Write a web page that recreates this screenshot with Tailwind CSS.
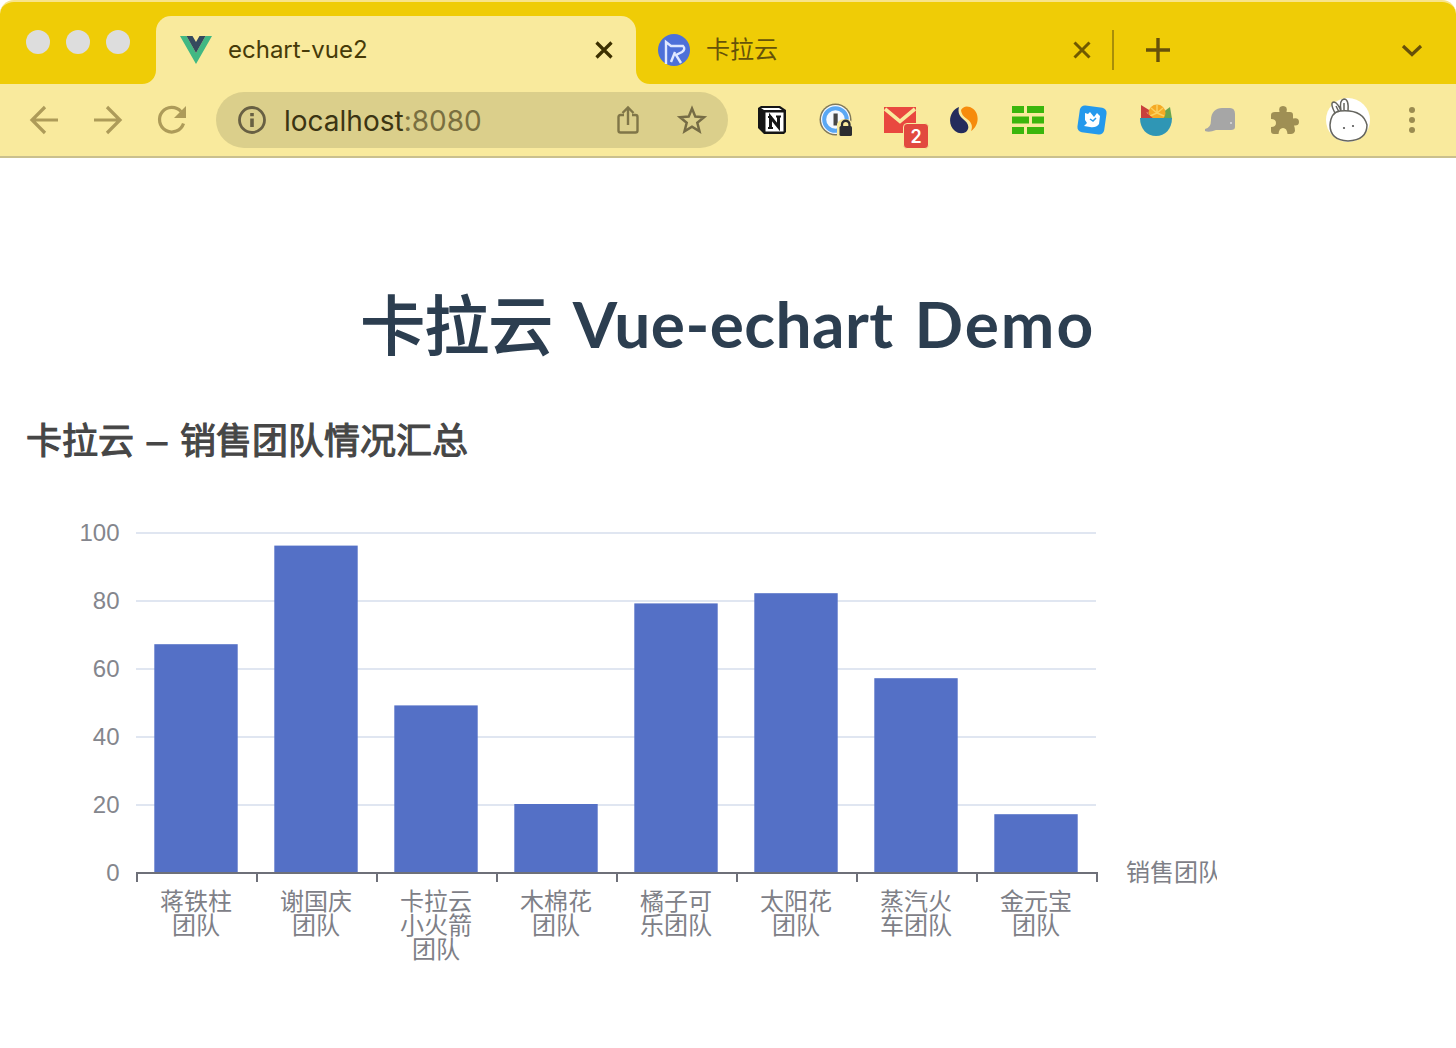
<!DOCTYPE html>
<html lang="zh-CN">
<head>
<meta charset="utf-8">
<title>echart-vue2</title>
<script src="https://cdn.jsdelivr.net/npm/@tailwindcss/browser@4"></script>
</head>
<body class="bg-white w-[1456px] h-[1048px] overflow-hidden font-['Inter','Noto_Sans_CJK_SC',sans-serif]">
<header>
  <!-- Tab strip -->
  <div class="h-[84px] rounded-t-[14px] bg-[#efcc06] border-t-2 border-[#f8e48a] flex">
    <div class="w-[156px] pl-[26px] pt-7 flex gap-4">
      <span class="size-6 rounded-full bg-[#dddddd]"></span>
      <span class="size-6 rounded-full bg-[#dddddd]"></span>
      <span class="size-6 rounded-full bg-[#dddddd]"></span>
    </div>
    <div class="relative mt-[14px] w-[480px] h-[68px] rounded-t-[15px] bg-[#f9ea9d] flex items-center pl-6 pr-5">
      <svg class="absolute -left-[14px] bottom-0" width="14" height="14"><path d="M14 0V14H0C8 14 14 8 14 0Z" fill="#f9ea9d"/></svg>
      <svg class="absolute -right-[14px] bottom-0" width="14" height="14"><path d="M0 0V14H14C6 14 0 8 0 0Z" fill="#f9ea9d"/></svg>
      <svg width="32" height="28" viewBox="0 0 32 28"><path d="M0 0H6.500L16 17L25.500 0H32L16 28Z" fill="#41b883"/><path d="M6.500 0H12.500L16 6L19.500 0H25.500L16 17Z" fill="#35495e"/></svg>
      <span class="ml-4 text-[24px] leading-8 text-[#463a08] flex-1">echart-vue2</span>
      <svg width="24" height="24" viewBox="0 0 24 24" fill="none" stroke="#3c3000" stroke-width="3.200"><path d="M4.500 4.500 19.500 19.500M19.500 4.500 4.500 19.500"/></svg>
    </div>
    <div class="mt-[14px] w-[477px] h-[68px] flex items-center pl-[22px] pr-[19px]">
      <svg width="32" height="32" viewBox="0 0 32 32"><circle cx="16" cy="16" r="16" fill="#4d70d9"/><path d="M8 30V8L13 12H25Q28 15 24 18L18 21L23 29M13 28L17 18" fill="none" stroke="#dfe8ff" stroke-width="2.400"/></svg>
      <span class="ml-4 text-[24px] leading-8 text-[#665309] flex-1">卡拉云</span>
      <svg width="24" height="24" viewBox="0 0 24 24" fill="none" stroke="#705900" stroke-width="3"><path d="M4.500 4.500 19.500 19.500M19.500 4.500 4.500 19.500"/></svg>
    </div>
    <div class="mt-7 ml-[-1px] h-10 w-[2px] bg-[#a88e08]"></div>
    <div class="mt-[14px] h-[68px] flex-1 flex items-center justify-between pl-8 pr-8">
      <svg width="24" height="24" viewBox="0 0 24 24" stroke="#66500a" stroke-width="3.400"><path d="M12 0V24M0 12H24"/></svg>
      <svg width="24" height="24" viewBox="0 0 24 24" fill="none" stroke="#66500a" stroke-width="3.200"><path d="M3 8 12 16.500 21 8"/></svg>
    </div>
  </div>
  <!-- Toolbar -->
  <div class="h-[74px] bg-[#f9ea9d] border-b-2 border-[#cac08e] flex items-center pl-3">
    <div class="w-16 flex justify-center"><svg width="32" height="32" viewBox="0 0 32 32" fill="none" stroke="#ad9b59" stroke-width="3.200"><path d="M30 16H4M17 3 4 16 17 29"/></svg></div>
    <div class="w-16 flex justify-center"><svg width="32" height="32" viewBox="0 0 32 32" fill="none" stroke="#ad9b59" stroke-width="3.200"><path d="M2 16H28M15 3 28 16 15 29"/></svg></div>
    <div class="w-16 flex justify-center"><svg width="32" height="32" viewBox="0 0 32 32"><path d="M27.500 19.500A12.300 12.300 0 1 1 25 7.500" fill="none" stroke="#ad9b59" stroke-width="3.200"/><path d="M30 2V14H18Z" fill="#ad9b59"/></svg></div>
    <div class="ml-3 w-[512px] h-14 rounded-full bg-[#dbcf8b] flex items-center pl-[22px] pr-5">
      <svg width="28" height="28" viewBox="0 0 28 28"><circle cx="14" cy="14" r="12.500" fill="none" stroke="#686043" stroke-width="2.800"/><path d="M12.200 12.500H15.800V21H12.200ZM12.200 7H15.800V10.200H12.200Z" fill="#686043"/></svg>
      <span class="ml-[18px] pt-[2px] text-[28px] leading-8 text-[#3b3413] flex-1">localhost<span class="text-[#7a6f40]">:8080</span></span>
      <svg width="24" height="30" viewBox="0 0 24 30" fill="none" stroke="#807648" stroke-width="2.400"><path d="M8 10H4.500Q2.500 10 2.500 12V25.500Q2.500 27.500 4.500 27.500H19.500Q21.500 27.500 21.500 25.500V12Q21.500 10 19.500 10H16M12 20V3M6.500 8 12 2.500 17.500 8"/></svg>
      <svg class="ml-9" width="32" height="32" viewBox="0 0 32 32" fill="none" stroke="#766c45" stroke-width="2.500"><path d="M16 4.500 19.300 12.600 28 13.200 21.300 18.800 23.500 27.300 16 22.700 8.500 27.300 10.700 18.800 4 13.200 12.700 12.600Z"/></svg>
    </div>
    <div class="ml-3 w-16 flex justify-center"><svg width="32" height="32" viewBox="0 0 32 32"><path d="M2 4 5 2H24L30 6V28L28 30H8L2 24Z" fill="#151515"/><path d="M5 4H23L26 6H8Z" fill="#fff"/><path d="M9.500 8.500H27.500V27.500H9.500Z" fill="#fff"/><path d="M14.500 24V13L22.500 23V12" fill="none" stroke="#151515" stroke-width="3"/><path d="M12 13H16M20 12.500H25M12 24H17" stroke="#151515" stroke-width="1.800"/></svg></div>
    <div class="w-16 flex justify-center"><svg width="34" height="34" viewBox="0 0 34 34"><circle cx="16.500" cy="16.500" r="16" fill="#80795a"/><circle cx="16.500" cy="16.500" r="14.500" fill="#f5f9ff"/><circle cx="16.500" cy="16.500" r="11.300" fill="none" stroke="#5aa8f4" stroke-width="4"/><path d="M14.500 10.500H18.700V22.500H14.500Z" fill="#474747"/><path d="M18 21Q20 16 26 16Q32 16 34 21V34H18Z" fill="#f9ea9d"/><rect x="20.500" y="23" width="12.500" height="10" rx="1.500" fill="#2c2d30"/><path d="M23 24V21.500A3.700 3.700 0 0 1 30.500 21.500V24" fill="none" stroke="#2c2d30" stroke-width="2.300"/></svg></div>
    <div class="w-16 flex justify-center relative">
      <svg width="32" height="26" viewBox="0 0 32 26"><path d="M0 0H32V26H0Z" fill="#e9483f"/><path d="M1 2 16 14.500 31 2" fill="none" stroke="#f9ea9d" stroke-width="3.600"/></svg>
      <span class="absolute left-[35px] top-[16px] w-[26px] h-[26px] rounded-[4px] border border-[#f9ea9d] bg-[#e2493f] text-white text-[18px] leading-[25px] font-semibold text-center">2</span>
    </div>
    <div class="w-16 flex justify-center"><svg width="30" height="30" viewBox="0 0 30 30"><path d="M10 2C0 6-2 20 6 26Q11 30 17 27C22 22 18 17 14 14Q8 9 10 2Z" fill="#242c5c"/><path d="M12 5Q15 0 21 2C31 6 31 20 22 26Q25 19 18 14Q12 10 12 5Z" fill="#f68b0c"/></svg></div>
    <div class="w-16 flex justify-center"><svg width="32" height="28" viewBox="0 0 32 28" fill="#3bb60c"><path d="M0 0H12V7H0ZM15 0H32V7H15ZM0 10.500H17V17.500H0ZM20 10.500H32V17.500H20ZM0 21H12V28H0ZM15 21H32V28H15Z"/></svg></div>
    <div class="w-16 flex justify-center"><svg width="32" height="32" viewBox="0 0 32 32"><rect x="2.500" y="2.500" width="27" height="27" rx="5" fill="#2499ec" transform="rotate(8 16 16)"/><path d="M9 9 12 10 14 8 18 13 21 9 24 12 23 20Q20 24 14 23L8 22 11 19 9 16Z" fill="#fff"/><path d="M14 15 17 17 20 14" fill="none" stroke="#2499ec" stroke-width="1.500"/></svg></div>
    <div class="w-16 flex justify-center"><svg width="32" height="32" viewBox="0 0 32 32"><path d="M1 1 14 9V16H1Z" fill="#c9403b"/><path d="M4 13 7 8 10 13Z" fill="#f2d6b0"/><path d="M22 9 30 3 32 15H22Z" fill="#68a550"/><circle cx="17" cy="9" r="8.500" fill="#f5aa24"/><path d="M17 1V9L10 12M17 9 24 12M11 4 17 9 23 4" stroke="#fbd05d" stroke-width="1.500" fill="none"/><path d="M1 4 14 15H1Z" fill="#c9403b"/><path d="M0 14H32C32 25 25 32 16 32S0 25 0 14Z" fill="#2f96b5"/></svg></div>
    <div class="w-16 flex justify-center"><svg width="32" height="26" viewBox="0 0 32 26"><path d="M1 22Q7 21 7 13C7 5 12 1 18 1H26Q31 1 31 7V20Q31 23 27 23H12Q5 26 1 24Z" fill="#a6a6a6"/><circle cx="27" cy="16" r="1" fill="#ddd"/></svg></div>
    <div class="w-16 flex justify-center"><svg width="32" height="32" viewBox="0 0 32 32" fill="#9f8f54"><path d="M7 8H11.500Q10 2 15 2Q20 2 18.500 8H22Q25 8 25 11V14.500Q31 13 31 18Q31 22 26 21.500Q27 24 27 27Q26 30 23 30H19.500Q19 24 15 24Q11 24 10.500 30H6Q3 30 3 27V23Q8 23 8 19Q8 15 3 15V11Q3 8 7 8Z"/></svg></div>
    <div class="w-16 flex justify-center"><svg width="44" height="44" viewBox="0 0 44 44"><circle cx="22" cy="22" r="22" fill="#fff"/><g fill="#fff" stroke="#65655f" stroke-width="1.500"><path d="M10 17Q3 4 8 4Q12 5 15 13Q13 2 18 1Q23 1 22 13"/><path d="M14 13Q5 14 4 27Q4 42 22 43Q41 42 41 27Q37 11 14 13Z"/><path d="M10 8 13 14M18 5V12"/></g><circle cx="18" cy="30" r="1.100" fill="#555"/><circle cx="27" cy="28" r="1.100" fill="#555"/></svg></div>
    <div class="w-16 flex justify-center"><svg width="6" height="28" viewBox="0 0 6 28" fill="#9b8c51"><circle cx="3" cy="4" r="3"/><circle cx="3" cy="14" r="3"/><circle cx="3" cy="24" r="3"/></svg></div>
  </div>
</header>
<main>
  <h1 class="mt-[118px] h-[96px] flex justify-center items-center gap-[20px] text-[#2c3e50] whitespace-nowrap leading-[96px]">
    <span class="pb-[7px] text-[64px] font-['Noto_Sans_CJK_SC',sans-serif] font-normal [-webkit-text-stroke:2px_#2c3e50]">卡拉云</span>
    <span class="flex gap-[21px] text-[64px] font-['Lato',sans-serif] font-bold"><span class="tracking-[0.4px]">Vue-echart</span><span class="tracking-[2px]">Demo</span></span>
  </h1>
  <svg class="mt-[28px] block" width="1217" height="600" viewBox="0 400 1217 600" font-family="'Liberation Sans','Noto Sans CJK SC',sans-serif">
    <g font-size="36" fill="#464646" stroke="#464646" stroke-width="1.100"><text x="26" y="454">卡拉云</text><text x="147" y="453">–</text><text x="180" y="454">销售团队情况汇总</text></g>
    <path d="M136 533H1096M136 601H1096M136 669H1096M136 737H1096M136 805H1096" stroke="#e0e6f1" stroke-width="2"/>
    <g id="bars" fill="#5470c6"></g>
    <path d="M136 873H1098M137 873V882M257 873V882M377 873V882M497 873V882M617 873V882M737 873V882M857 873V882M977 873V882M1097 873V882" stroke="#6e7079" stroke-width="2"/>
    <g font-size="24" fill="#84868d" text-anchor="end"><text x="119.500" y="541">100</text><text x="119.500" y="609">80</text><text x="119.500" y="677">60</text><text x="119.500" y="745">40</text><text x="119.500" y="813">20</text><text x="119.500" y="881">0</text></g>
    <g id="labels" font-size="24" fill="#7e8087" text-anchor="middle"></g>
    <text x="1126" y="881" font-size="24" fill="#7e8087">销售团队</text>
  </svg>
</main>
<script>
const data = [[67,'蒋铁柱','团队'],[96,'谢国庆','团队'],[49,'卡拉云','小火箭','团队'],[20,'木棉花','团队'],[79,'橘子可','乐团队'],[82,'太阳花','团队'],[57,'蒸汽火','车团队'],[17,'金元宝','团队']];
let bars = '', labels = '';
data.forEach(([value, ...lines], i) => {
  const h = value * 3.4;
  bars += `<rect x="${154.3 + i * 120}" y="${872 - h}" width="83.4" height="${h}"/>`;
  lines.forEach((line, n) => { labels += `<text x="${196 + i * 120}" y="${909.5 + n * 24}">${line}</text>`; });
});
document.getElementById('bars').innerHTML = bars;
document.getElementById('labels').innerHTML = labels;
</script>
</body>
</html>
